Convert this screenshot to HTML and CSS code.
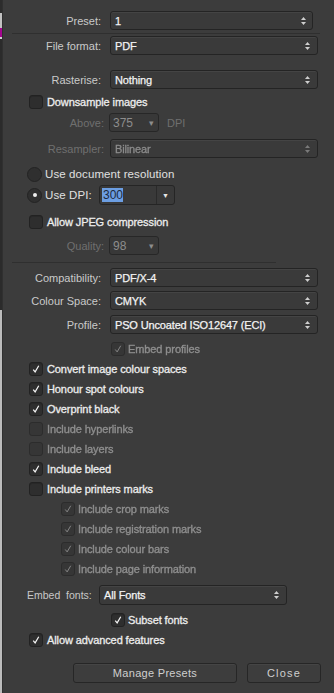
FILE: index.html
```html
<!DOCTYPE html>
<html lang="en">

<head>
    <meta charset="UTF-8">
    <meta name="viewport" content="width=device-width, initial-scale=1.0">
    <title>Export PDF</title>
    <link rel="stylesheet" href="styles.css">
</head>

<body>
    <div class="edge"></div>

    <main class="panel">
        <!-- preset -->
        <div class="row r-preset">
            <span class="lbl">Preset:</span>
            <div class="select narrow"><span class="val">1</span><svg class="spin" viewBox="0 0 5 10"><polygon points="0,4 2.5,1 5,4"/><polygon points="0,6 2.5,9 5,6"/></svg></div>
        </div>
        <div class="rule"></div>

        <div class="row r-format">
            <span class="lbl">File format:</span>
            <div class="select"><span class="val">PDF</span><svg class="spin" viewBox="0 0 5 10"><polygon points="0,4 2.5,1 5,4"/><polygon points="0,6 2.5,9 5,6"/></svg></div>
        </div>

        <div class="row r-raster">
            <span class="lbl">Rasterise:</span>
            <div class="select"><span class="val">Nothing</span><svg class="spin" viewBox="0 0 5 10"><polygon points="0,4 2.5,1 5,4"/><polygon points="0,6 2.5,9 5,6"/></svg></div>
        </div>

        <label class="check r-down">
            <span class="box"></span><span class="txt">Downsample images</span>
        </label>

        <div class="row r-above">
            <span class="lbl sub off">Above:</span>
            <div class="mini off"><span>375</span><span class="tri">&#9662;</span></div>
            <span class="unit">DPI</span>
        </div>

        <div class="row r-resamp">
            <span class="lbl sub off">Resampler:</span>
            <div class="select off"><span class="val">Bilinear</span><svg class="spin" viewBox="0 0 5 10"><polygon points="0,4 2.5,1 5,4"/><polygon points="0,6 2.5,9 5,6"/></svg></div>
        </div>

        <label class="radio r-docres">
            <span class="dot"></span><span class="rtxt">Use document resolution</span>
        </label>
        <label class="radio r-dpi">
            <span class="dot on"></span><span class="rtxt">Use DPI:</span>
            <div class="dpi-field">
                <span class="dpi-text"><span class="sel">300</span></span>
                <span class="dpi-btn">&#9660;</span>
            </div>
        </label>

        <label class="check r-jpeg">
            <span class="box"></span><span class="txt">Allow JPEG compression</span>
        </label>

        <div class="row r-quality">
            <span class="lbl sub off">Quality:</span>
            <div class="mini off"><span>98</span><span class="tri">&#9662;</span></div>
        </div>
        <div class="rule short"></div>

        <div class="row r-compat">
            <span class="lbl">Compatibility:</span>
            <div class="select"><span class="val">PDF/X-4</span><svg class="spin" viewBox="0 0 5 10"><polygon points="0,4 2.5,1 5,4"/><polygon points="0,6 2.5,9 5,6"/></svg></div>
        </div>
        <div class="row r-space">
            <span class="lbl">Colour Space:</span>
            <div class="select"><span class="val">CMYK</span><svg class="spin" viewBox="0 0 5 10"><polygon points="0,4 2.5,1 5,4"/><polygon points="0,6 2.5,9 5,6"/></svg></div>
        </div>
        <div class="row r-profile">
            <span class="lbl">Profile:</span>
            <div class="select"><span class="val">PSO Uncoated ISO12647 (ECI)</span><svg class="spin" viewBox="0 0 5 10"><polygon points="0,4 2.5,1 5,4"/><polygon points="0,6 2.5,9 5,6"/></svg></div>
        </div>

        <label class="check deep dis r-embed">
            <span class="box on"><svg viewBox="0 0 14 14"><path d="M3.8 7.6 L6 10.4 L10.2 3.2"/></svg></span><span class="txt">Embed profiles</span>
        </label>

        <div class="checks">
            <label class="check"><span class="box on"><svg viewBox="0 0 14 14"><path d="M3.8 7.6 L6 10.4 L10.2 3.2"/></svg></span><span class="txt">Convert image colour spaces</span></label>
            <label class="check"><span class="box on"><svg viewBox="0 0 14 14"><path d="M3.8 7.6 L6 10.4 L10.2 3.2"/></svg></span><span class="txt">Honour spot colours</span></label>
            <label class="check"><span class="box on"><svg viewBox="0 0 14 14"><path d="M3.8 7.6 L6 10.4 L10.2 3.2"/></svg></span><span class="txt">Overprint black</span></label>
            <label class="check dis"><span class="box"></span><span class="txt">Include hyperlinks</span></label>
            <label class="check dis"><span class="box"></span><span class="txt">Include layers</span></label>
            <label class="check"><span class="box on"><svg viewBox="0 0 14 14"><path d="M3.8 7.6 L6 10.4 L10.2 3.2"/></svg></span><span class="txt">Include bleed</span></label>
            <label class="check"><span class="box"></span><span class="txt">Include printers marks</span></label>
            <label class="check indent dis"><span class="box on"><svg viewBox="0 0 14 14"><path d="M3.8 7.6 L6 10.4 L10.2 3.2"/></svg></span><span class="txt">Include crop marks</span></label>
            <label class="check indent dis"><span class="box on"><svg viewBox="0 0 14 14"><path d="M3.8 7.6 L6 10.4 L10.2 3.2"/></svg></span><span class="txt">Include registration marks</span></label>
            <label class="check indent dis"><span class="box on"><svg viewBox="0 0 14 14"><path d="M3.8 7.6 L6 10.4 L10.2 3.2"/></svg></span><span class="txt">Include colour bars</span></label>
            <label class="check indent dis"><span class="box on"><svg viewBox="0 0 14 14"><path d="M3.8 7.6 L6 10.4 L10.2 3.2"/></svg></span><span class="txt">Include page information</span></label>
        </div>

        <div class="row r-fonts">
            <span class="flbl">Embed&nbsp; fonts:</span>
            <div class="select fonts"><span class="val">All Fonts</span><svg class="spin" viewBox="0 0 5 10"><polygon points="0,4 2.5,1 5,4"/><polygon points="0,6 2.5,9 5,6"/></svg></div>
        </div>

        <label class="check deep r-subset">
            <span class="box on"><svg viewBox="0 0 14 14"><path d="M3.8 7.6 L6 10.4 L10.2 3.2"/></svg></span><span class="txt">Subset fonts</span>
        </label>
        <label class="check">
            <span class="box on"><svg viewBox="0 0 14 14"><path d="M3.8 7.6 L6 10.4 L10.2 3.2"/></svg></span><span class="txt">Allow advanced features</span>
        </label>

        <div class="buttons">
            <button class="btn manage">Manage Presets</button>
            <button class="btn close">Close</button>
        </div>
    </main>
</body>

</html>
```

FILE: styles.css
```css
body {
    margin: 0;
    height: 693px;
    overflow: hidden;
    display: flex;
    background-color: #3c3c3c;
    font-family: "Liberation Sans", Arial, sans-serif;
    font-size: 11px;
    color: #ececec;
}

/* strip of the window behind */
.edge {
    width: 2px;
    flex: none;
    background: linear-gradient(to bottom,
        #2c2c2c 0 13px,
        #c2c2c2 13px 28px,
        #a4058f 28px 37px,
        #d0d0d0 37px 39px,
        #2b2b2b 39px 310px,
        #bcbcbc 310px);
}

.panel {
    flex: 1;
    display: flex;
    flex-direction: column;
    padding-top: 11px;
    border-left: 1px solid #303030;
}

.row {
    display: flex;
    align-items: center;
    height: 19px;
    flex: none;
}

.lbl {
    width: 98px;
    margin-right: 9px;
    text-align: right;
    color: #cacaca;
    flex: none;
}

.lbl.sub {
    width: 101px;
    margin-right: 5px;
}

.off {
    color: #6f6f6f;
}

.rule {
    height: 1px;
    margin: 3px 14px 0 9px;
    background-color: #2f2f2f;
    flex: none;
}

.rule.short {
    margin: 7px 58px 0 9px;
}

.select {
    width: 208px;
    height: 19px;
    box-sizing: border-box;
    border: 1px solid #242424;
    border-radius: 3px;
    background-color: #3a3a3a;
    box-shadow: inset 0 1px 0 #444;
    display: flex;
    align-items: center;
    justify-content: space-between;
    padding: 0 7px 0 4px;
    flex: none;
}

.select.narrow {
    width: 203px;
    padding-right: 6px;
}

.select.fonts {
    width: 188px;
    height: 20px;
}

.val {
    color: #f3f3f3;
    -webkit-text-stroke: 0.25px #f3f3f3;
    letter-spacing: -0.15px;
}

.spin {
    width: 5px;
    height: 10px;
    fill: #cfcfcf;
}

.select.off .val {
    color: #8c8c8c;
    -webkit-text-stroke: 0.3px #8c8c8c;
    filter: blur(0.3px);
}

.select.off .spin {
    fill: #7a7a7a;
}

.mini {
    width: 50px;
    height: 19px;
    box-sizing: border-box;
    border: 1px solid #272727;
    border-radius: 3px;
    background-color: #383838;
    display: flex;
    align-items: center;
    justify-content: space-between;
    padding: 0 4px 0 3px;
    color: #8d8d8d;
    font-size: 12px;
}

.mini .tri {
    font-size: 9px;
}

.unit {
    margin-left: 8px;
    color: #6f6f6f;
}

/* vertical rhythm */
.r-format { margin-top: 2px; }
.r-raster { margin-top: 15px; }
.r-down { margin-top: 3px; }
.r-above { margin-top: 1px; }
.r-resamp { margin-top: 7px; }
.r-resamp .select { margin-left: 1px; }
.r-docres { margin-top: 6px; height: 18px; }
.r-dpi { margin-top: 1px; }
.r-jpeg { margin-top: 7px; }
.r-quality { margin-top: 4px; }
.r-compat { margin-top: 5px; }
.r-space { margin-top: 4px; }
.r-profile { margin-top: 5px; }
.r-embed { margin-top: 5px; }
.r-fonts { margin-top: 6px; height: 20px; }
.r-subset { margin-top: 5px; }

/* checkboxes */
.check {
    display: flex;
    align-items: center;
    gap: 4px;
    height: 20px;
    padding-left: 26px;
    flex: none;
}

.check.indent {
    padding-left: 58px;
    gap: 3px;
}

.check.deep {
    padding-left: 108px;
    gap: 3px;
}

.box {
    width: 14px;
    height: 14px;
    box-sizing: border-box;
    border: 1px solid #222;
    border-radius: 3px;
    background-color: #2e2e2e;
    box-shadow: inset 0 1px 0 #282828;
    flex: none;
}

.box svg {
    display: block;
    width: 12px;
    height: 12px;
    fill: none;
    stroke: #f5f5f5;
    stroke-width: 1.4;
}

.txt {
    color: #ededed;
    -webkit-text-stroke: 0.3px #ededed;
    letter-spacing: -0.1px;
}

.check.dis .box {
    background-color: #363636;
    border-color: #2c2c2c;
    box-shadow: none;
}

.check.dis .box svg {
    stroke: #8a8a8a;
    stroke-width: 1.1;
}

.check.dis .txt {
    color: #8e8e8e;
    -webkit-text-stroke: 0.35px #8e8e8e;
    filter: blur(0.25px);
}

.checks {
    display: flex;
    flex-direction: column;
}

/* radios */
.radio {
    display: flex;
    align-items: center;
    height: 20px;
    padding-left: 24px;
    flex: none;
}

.dot {
    width: 15px;
    height: 15px;
    box-sizing: border-box;
    border-radius: 50%;
    border: 1px solid #232323;
    background-color: #2f2f2f;
    margin-right: 3px;
    display: flex;
    align-items: center;
    justify-content: center;
    flex: none;
}

.dot.on::after {
    content: "";
    width: 4px;
    height: 4px;
    border-radius: 50%;
    background-color: #eeeeee;
}

.rtxt {
    color: #e0e0e0;
    font-size: 11.5px;
    letter-spacing: 0.1px;
    white-space: nowrap;
}

.r-dpi .rtxt {
    width: 54px;
    flex: none;
}

.dpi-field {
    width: 76px;
    height: 20px;
    box-sizing: border-box;
    display: flex;
    border: 1px solid #252525;
    border-radius: 3px;
    background-color: #393939;
}

.dpi-text {
    width: 57px;
    box-sizing: border-box;
    padding: 2px 0 2px 2px;
    display: flex;
    border-right: 1px solid #2a2a2a;
}

.sel {
    background-color: #6c9ee2;
    color: #1c2a3e;
    width: 20px;
    padding-left: 1px;
    line-height: 14px;
    font-size: 12px;
}

.dpi-btn {
    flex: 1;
    display: flex;
    align-items: center;
    justify-content: center;
    color: #e6e6e6;
    font-size: 7px;
}

/* embed fonts */
.flbl {
    width: 96px;
    box-sizing: border-box;
    padding-left: 24px;
    color: #c8c8c8;
    font-size: 10.5px;
    white-space: nowrap;
    flex: none;
}

/* bottom buttons */
.buttons {
    display: flex;
    gap: 10px;
    margin-top: 13px;
    padding-left: 70px;
}

.btn {
    height: 20px;
    box-sizing: border-box;
    border: 1px solid #262626;
    border-radius: 3px;
    background-color: #3d3d3d;
    box-shadow: inset 0 1px 0 #454545;
    color: #cfcfcf;
    font-family: "Liberation Sans", Arial, sans-serif;
    font-size: 11px;
    padding: 0;
}

.btn.manage {
    width: 164px;
    letter-spacing: 0.3px;
}

.btn.close {
    width: 74px;
    letter-spacing: 1.2px;
}
```
